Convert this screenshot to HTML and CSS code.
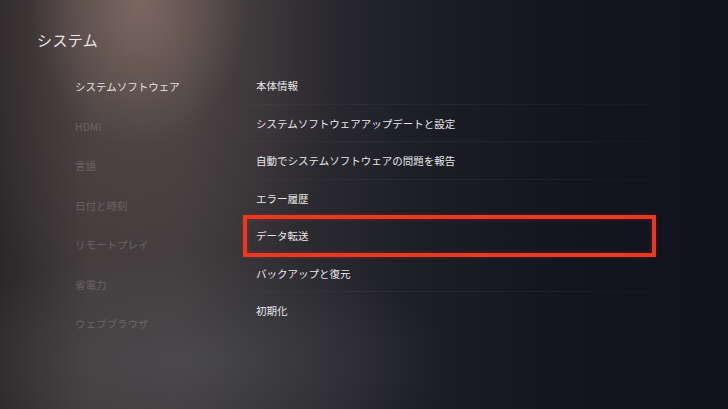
FILE: index.html
```html
<!DOCTYPE html>
<html lang="ja">
<head>
<meta charset="utf-8">
<link rel="stylesheet" href="styles.css">
</head>
<body>
<div class="screen">
  <h1 class="title">システム</h1>
  <div class="cols">
    <ul class="side">
      <li class="side-item active">システムソフトウェア</li>
      <li class="side-item">HDMI</li>
      <li class="side-item">言語</li>
      <li class="side-item">日付と時刻</li>
      <li class="side-item">リモートプレイ</li>
      <li class="side-item">省電力</li>
      <li class="side-item">ウェブブラウザ</li>
    </ul>
    <ul class="menu">
      <li class="menu-item">本体情報</li>
      <li class="menu-item">システムソフトウェアアップデートと設定</li>
      <li class="menu-item">自動でシステムソフトウェアの問題を報告</li>
      <li class="menu-item">エラー履歴</li>
      <li class="menu-item selected">データ転送</li>
      <li class="menu-item">バックアップと復元</li>
      <li class="menu-item last">初期化</li>
    </ul>
  </div>
</div>
</body>
</html>
```
FILE: styles.css
```css
* { box-sizing: border-box; }
html, body { margin: 0; padding: 0; }
body {
  width: 728px;
  height: 409px;
  overflow: hidden;
  font-family: "Noto Sans CJK JP", "Noto Sans", sans-serif;
}
.screen {
  width: 728px;
  height: 409px;
  padding-top: 29px;
  background:
    radial-gradient(ellipse 110px 150px at 140px 0px, rgba(160,130,118,0.55), rgba(160,130,118,0) 100%),
    radial-gradient(ellipse 200px 300px at 150px 40px, rgba(110,92,88,0.4), rgba(110,92,88,0) 100%),
    radial-gradient(ellipse 260px 110px at 190px 360px, rgba(90,90,96,0.45), rgba(90,90,96,0) 100%),
    linear-gradient(90deg, #2c282a 0px, #403b3c 90px, #3e3a3c 180px, #2c2b30 300px, #1c1d25 430px, #13161f 560px, #10131c 728px);
}
.title {
  margin: 0 0 0 37px;
  font-size: 15px;
  font-weight: 400;
  line-height: 22px;
  color: #ebe7e7;
  letter-spacing: 0.4px;
}
.cols {
  display: flex;
  margin-top: 16px;
}
ul { list-style: none; margin: 0; padding: 0; }
.side {
  width: 245px;
  padding-left: 75px;
}
.side-item {
  height: 39.5px;
  display: flex;
  align-items: center;
  font-size: 10.5px;
  color: #6a6566;
}
.side-item.active { color: #e6e2e2; }
.menu {
  width: 409px;
}
.menu-item {
  position: relative;
  height: 37.5px;
  display: flex;
  align-items: center;
  padding-left: 11px;
  font-size: 10.5px;
  color: #e8e8ea;
  background: linear-gradient(90deg, rgba(255,255,255,0.02), rgba(255,255,255,0.05) 50%, rgba(255,255,255,0.02)) bottom / 100% 1px no-repeat;
}
.menu-item.last { background: none; }
.menu-item.selected {
  background: none;
  outline: 4px solid #ec3820;
  outline-offset: -2px;
  box-shadow: 0 0 5px rgba(255,60,30,0.6), inset 0 0 6px rgba(255,60,30,0.5);
}
```
